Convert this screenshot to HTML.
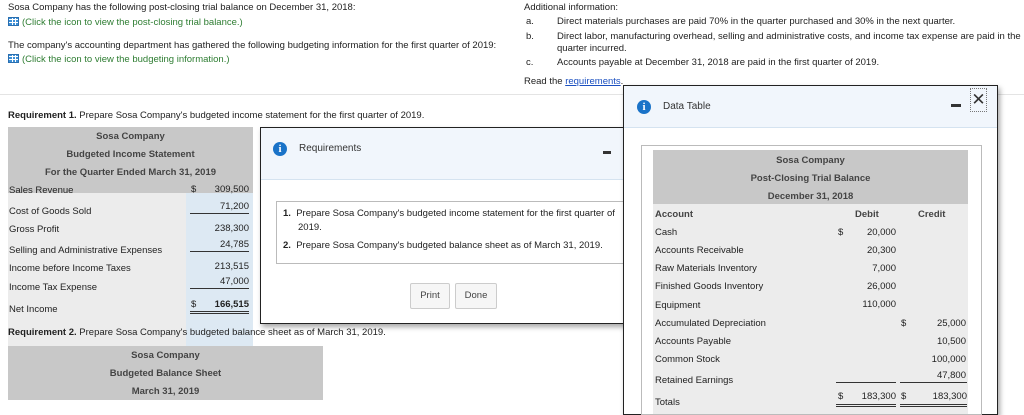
<!DOCTYPE html>
<html><head><meta charset="utf-8"><style>
*{margin:0;padding:0;box-sizing:border-box}
body{width:1024px;height:411px;overflow:hidden;background:#fff;font-family:"Liberation Sans",Arial,sans-serif;font-size:9.5px;color:#222;position:relative}
.a{position:absolute;white-space:nowrap}
.g{color:#2e7d32}
.ic{display:inline-block;width:11px;height:9px;background:#3d8fd6;border:1px solid #2a6fb0;vertical-align:-1px;margin-right:3px;background-image:linear-gradient(90deg,transparent 3px,#fff 3px,#fff 4px,transparent 4px,transparent 6px,#fff 6px,#fff 7px,transparent 7px),linear-gradient(0deg,transparent 2px,#fff 2px,#fff 3px,transparent 3px,transparent 5px,#fff 5px,#fff 6px,transparent 6px)}
.r{text-align:right}
.ul{border-bottom:1px solid #333}
.dul{border-bottom:3px double #333}
.info{position:absolute;width:14px;height:14px;border-radius:50%;background:#1a73c8;color:#fff;font:bold 11px "Liberation Serif",serif;text-align:center;line-height:14px}
</style></head><body>
<div class="a" style="left:8px;top:2px">Sosa Company has the following post-closing trial balance on December 31, 2018:</div>
<div class="a g" style="left:8px;top:17px"><span class="ic"></span>(Click the icon to view the post-closing trial balance.)</div>
<div class="a" style="left:8px;top:40px">The company's accounting department has gathered the following budgeting information for the first quarter of 2019:</div>
<div class="a g" style="left:8px;top:54px"><span class="ic"></span>(Click the icon to view the budgeting information.)</div>

<div class="a" style="left:524px;top:2px">Additional information:</div>
<div class="a" style="left:526px;top:16px">a.</div><div class="a" style="left:557px;top:16px">Direct materials purchases are paid 70% in the quarter purchased and 30% in the next quarter.</div>
<div class="a" style="left:526px;top:31px">b.</div><div class="a" style="left:557px;top:31px">Direct labor, manufacturing overhead, selling and administrative costs, and income tax expense are paid in the</div>
<div class="a" style="left:557px;top:43px">quarter incurred.</div>
<div class="a" style="left:526px;top:57px">c.</div><div class="a" style="left:557px;top:57px">Accounts payable at December 31, 2018 are paid in the first quarter of 2019.</div>
<div class="a" style="left:524px;top:76px">Read the <span style="color:#1a4fc0;text-decoration:underline">requirements</span>.</div>
<div class="a" style="left:0;top:94px;width:1024px;height:1px;background:#e4e4e4"></div>

<div class="a" style="left:8px;top:110px"><b>Requirement 1.</b> Prepare Sosa Company's budgeted income statement for the first quarter of 2019.</div>

<!-- income statement -->
<div class="a" style="left:8px;top:127px;width:245px;height:66px;background:#c8c8c8"></div>
<div class="a" style="left:8px;top:193px;width:178px;height:169px;background:#ececec"></div>
<div class="a" style="left:186px;top:193px;width:67px;height:169px;background:#dde9f3"></div>
<div class="a" style="left:8px;top:131px;width:245px;text-align:center;font-weight:bold;color:#444">Sosa Company</div>
<div class="a" style="left:8px;top:149px;width:245px;text-align:center;font-weight:bold;color:#444">Budgeted Income Statement</div>
<div class="a" style="left:8px;top:167px;width:245px;text-align:center;font-weight:bold;color:#444">For the Quarter Ended March 31, 2019</div>
<div class="a" style="left:9px;top:185px">Sales Revenue</div>
<div class="a" style="left:9px;top:206px">Cost of Goods Sold</div>
<div class="a" style="left:9px;top:224px">Gross Profit</div>
<div class="a" style="left:9px;top:245px">Selling and Administrative Expenses</div>
<div class="a" style="left:9px;top:263px">Income before Income Taxes</div>
<div class="a" style="left:9px;top:282px">Income Tax Expense</div>
<div class="a" style="left:9px;top:304px">Net Income</div>
<div class="a" style="left:191px;top:184px">$</div>
<div class="a r" style="left:190px;top:184px;width:59px">309,500</div>
<div class="a r ul" style="left:190px;top:201px;width:59px;height:13px">71,200</div>
<div class="a r" style="left:190px;top:223px;width:59px">238,300</div>
<div class="a r ul" style="left:190px;top:239px;width:59px;height:13px">24,785</div>
<div class="a r" style="left:190px;top:261px;width:59px">213,515</div>
<div class="a r ul" style="left:190px;top:276px;width:59px;height:13px">47,000</div>
<div class="a" style="left:191px;top:299px">$</div>
<div class="a r dul" style="left:190px;top:299px;width:59px;height:15px;font-weight:bold">166,515</div>

<div class="a" style="left:8px;top:327px"><b>Requirement 2.</b> Prepare Sosa Company's budgeted balance sheet as of March 31, 2019.</div>
<div class="a" style="left:8px;top:346px;width:315px;height:54px;background:#c8c8c8"></div>
<div class="a" style="left:8px;top:350px;width:315px;text-align:center;font-weight:bold;color:#444">Sosa Company</div>
<div class="a" style="left:8px;top:368px;width:315px;text-align:center;font-weight:bold;color:#444">Budgeted Balance Sheet</div>
<div class="a" style="left:8px;top:386px;width:315px;text-align:center;font-weight:bold;color:#444">March 31, 2019</div>

<!-- requirements modal -->
<div class="a" style="left:260px;top:127px;width:380px;height:197px;background:#fff;border:1px solid #222;box-shadow:2px 3px 5px rgba(0,0,0,.35)"></div>
<div class="a" style="left:261px;top:128px;width:378px;height:52px;background:#f1f6fc;border-bottom:1px solid #d5e3f0"></div>
<div class="info" style="left:273px;top:142px">i</div>
<div class="a" style="left:299px;top:143px;font-size:10px;color:#333">Requirements</div>
<div class="a" style="left:603px;top:151px;width:8px;height:3px;background:#333"></div>
<div class="a" style="left:276px;top:201px;width:350px;height:63px;border:1px solid #bbb;border-right:none"></div>
<div class="a" style="left:283px;top:208px"><b>1.</b>&nbsp; Prepare Sosa Company's budgeted income statement for the first quarter of</div>
<div class="a" style="left:298px;top:222px">2019.</div>
<div class="a" style="left:283px;top:240px"><b>2.</b>&nbsp; Prepare Sosa Company's budgeted balance sheet as of March 31, 2019.</div>
<div class="a" style="left:410px;top:283px;width:40px;height:26px;border:1px solid #ccc;border-radius:2px;background:#f6f6f6;text-align:center;line-height:24px;color:#444">Print</div>
<div class="a" style="left:455px;top:283px;width:42px;height:26px;border:1px solid #ccc;border-radius:2px;background:#f6f6f6;text-align:center;line-height:24px;color:#444">Done</div>

<!-- data table modal -->
<div class="a" style="left:623px;top:85px;width:375px;height:330px;background:#fff;border:1px solid #222;box-shadow:2px 3px 5px rgba(0,0,0,.35)"></div>
<div class="a" style="left:624px;top:86px;width:373px;height:42px;background:#f1f6fc;border-bottom:1px solid #d5e3f0"></div>
<div class="info" style="left:637px;top:100px">i</div>
<div class="a" style="left:663px;top:101px;font-size:10px;color:#333">Data Table</div>
<div class="a" style="left:951px;top:104px;width:10px;height:3px;background:#333"></div>
<div class="a" style="left:970px;top:88px;width:17px;height:24px;border:1px dotted #777;text-align:center;font-size:17px;line-height:22px;color:#333">✕</div>
<div class="a" style="left:641px;top:145px;width:341px;height:270px;border:1px solid #bbb"></div>
<div class="a" style="left:653px;top:150px;width:315px;height:54px;background:#c8c8c8"></div>
<div class="a" style="left:653px;top:204px;width:315px;height:210px;background:#ececec"></div>
<div class="a" style="left:653px;top:155px;width:315px;text-align:center;font-weight:bold;color:#444">Sosa Company</div>
<div class="a" style="left:653px;top:173px;width:315px;text-align:center;font-weight:bold;color:#444">Post-Closing Trial Balance</div>
<div class="a" style="left:653px;top:191px;width:315px;text-align:center;font-weight:bold;color:#444">December 31, 2018</div>
<div class="a" style="left:655px;top:209px;font-weight:bold;color:#444">Account</div>
<div class="a" style="left:855px;top:209px;font-weight:bold;color:#444">Debit</div>
<div class="a" style="left:918px;top:209px;font-weight:bold;color:#444">Credit</div>
<div class="a" style="left:655px;top:227px">Cash</div>
<div class="a" style="left:655px;top:245px">Accounts Receivable</div>
<div class="a" style="left:655px;top:263px">Raw Materials Inventory</div>
<div class="a" style="left:655px;top:281px">Finished Goods Inventory</div>
<div class="a" style="left:655px;top:300px">Equipment</div>
<div class="a" style="left:655px;top:318px">Accumulated Depreciation</div>
<div class="a" style="left:655px;top:336px">Accounts Payable</div>
<div class="a" style="left:655px;top:354px">Common Stock</div>
<div class="a" style="left:655px;top:375px">Retained Earnings</div>
<div class="a" style="left:655px;top:397px">Totals</div>
<div class="a" style="left:838px;top:227px">$</div>
<div class="a r" style="left:836px;top:227px;width:60px">20,000</div>
<div class="a r" style="left:836px;top:245px;width:60px">20,300</div>
<div class="a r" style="left:836px;top:263px;width:60px">7,000</div>
<div class="a r" style="left:836px;top:281px;width:60px">26,000</div>
<div class="a r" style="left:836px;top:299px;width:60px">110,000</div>
<div class="a" style="left:901px;top:318px">$</div>
<div class="a r" style="left:900px;top:318px;width:66px">25,000</div>
<div class="a r" style="left:900px;top:336px;width:66px">10,500</div>
<div class="a r" style="left:900px;top:354px;width:66px">100,000</div>
<div class="a r" style="left:900px;top:370px;width:66px">47,800</div>
<div class="a ul" style="left:836px;top:382px;width:60px"></div>
<div class="a ul" style="left:900px;top:382px;width:67px"></div>
<div class="a" style="left:838px;top:391px">$</div>
<div class="a r dul" style="left:836px;top:391px;width:60px;height:16px">183,300</div>
<div class="a" style="left:901px;top:391px">$</div>
<div class="a r dul" style="left:900px;top:391px;width:67px;height:16px">183,300</div>
</body></html>
